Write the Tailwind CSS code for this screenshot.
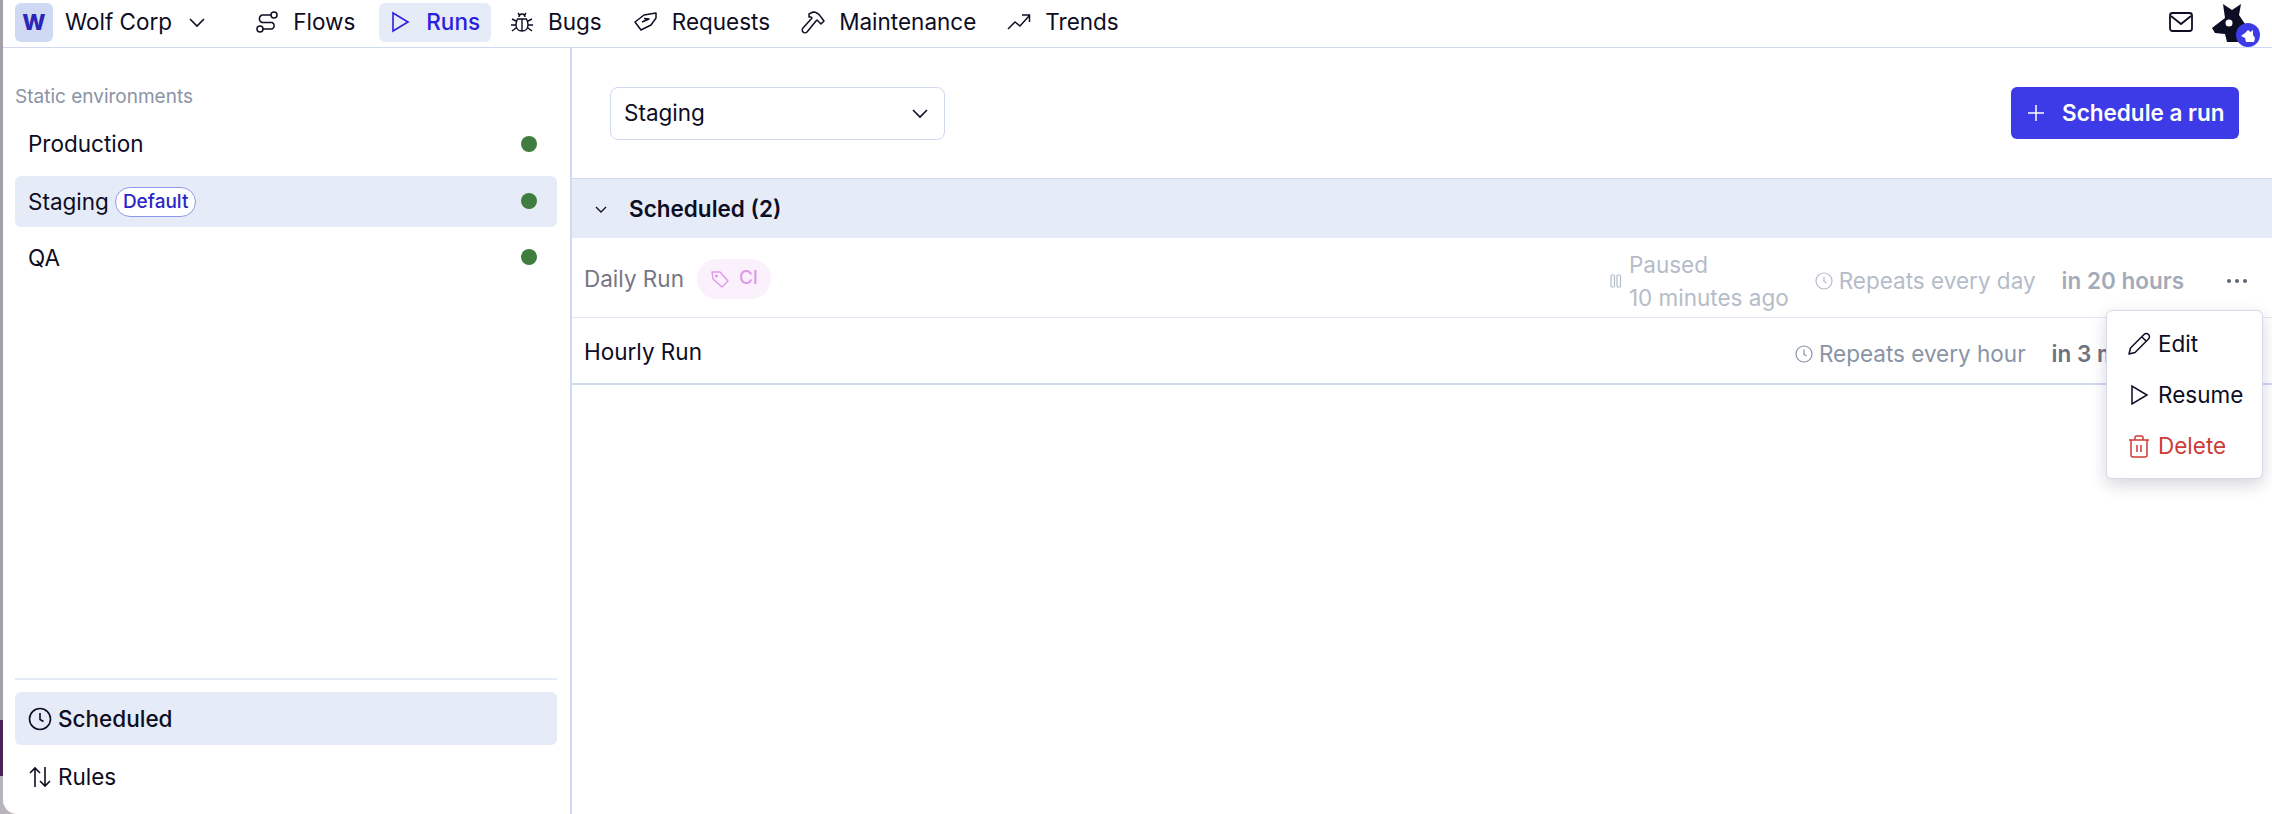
<!DOCTYPE html>
<html lang="en">
<head>
  <meta charset="UTF-8" />
  <title>Runs - Scheduled</title>
  <script src="https://cdn.jsdelivr.net/npm/@tailwindcss/browser@4"></script>
</head>
<body class="bg-[linear-gradient(#a49fa8_720px,#4a2458_720px,#4a2458_776px,#b9b4bc_776px)] font-['Inter',sans-serif] text-[22.5px] text-[#0d0d24]">
<div class="relative ml-[3px] h-[814px] overflow-hidden rounded-bl-[14px] bg-white">

  <!-- top nav -->
  <header class="flex h-[48px] items-center border-b border-[#d0d8f2] pb-[3px] pl-[12px] pr-[12px]">
    <div class="flex h-[39px] w-[38px] items-center justify-center rounded-[6px] bg-[#d0d9f4] text-[22px] font-extrabold text-[#2a26b8]">W</div>
    <span class="ml-[12px]">Wolf Corp</span>
    <svg class="ml-[15px]" width="20" height="20" viewBox="0 0 20 20" fill="none" stroke="currentColor" stroke-width="1.6"><path d="M3 7l7 7 7-7"/></svg>
    <nav class="ml-[36px] flex items-center gap-[7px]">
      <a class="mr-[5px] flex h-[39px] items-center gap-[14px] px-[12px]">
        <svg width="24" height="24" viewBox="0 0 24 24" fill="none" stroke="currentColor" stroke-width="1.5"><circle cx="19" cy="5" r="3"/><circle cx="5" cy="19" r="3"/><path d="M16 5H7a4 4 0 0 0 0 7.500h10a3.500 3.500 0 0 1 0 6.500H8"/></svg>
        Flows
      </a>
      <a class="flex h-[39px] items-center gap-[14px] rounded-[6px] bg-[#e6ebf8] px-[11px] font-medium text-[#2a20e0]">
        <svg width="22" height="24" viewBox="0 0 22 24" fill="none" stroke="currentColor" stroke-width="1.6"><path d="M3 3v18l15-9z"/></svg>
        Runs
      </a>
      <a class="mr-[1px] flex h-[39px] items-center gap-[14px] px-[12px]">
        <svg width="24" height="24" viewBox="0 0 24 24" fill="none" stroke="currentColor" stroke-width="1.4"><path d="M8 3l2 3M16 3l-2 3M9 7a3 3 0 0 1 6 0M12 9v12M7.500 9h9c1 2 1.500 4 1.500 6 0 3.500-2.500 6-6 6s-6-2.500-6-6c0-2 .5-4 1.500-6zM2 9l4 2M22 9l-4 2M1 15h5M23 15h-5M2 21l4-3M22 21l-4-3"/></svg>
        Bugs
      </a>
      <a class="flex h-[39px] items-center gap-[14px] px-[12px]">
        <svg width="24" height="24" viewBox="0 0 24 24" fill="none" stroke="currentColor" stroke-width="1.5" stroke-linejoin="round"><path d="M1 12l9-7 12-2v5l-5 7-10 5zM8 12l7-3-5-.5"/></svg>
        Requests
      </a>
      <a class="flex h-[39px] items-center gap-[14px] px-[12px]">
        <svg width="24" height="24" viewBox="0 0 24 24" fill="none" stroke="currentColor" stroke-width="1.5" stroke-linejoin="round"><path d="M8 4l4-2c3 0 6 2 8 5l3 4-3 3-4-4-1 1L6 22c-1 1-3 1-4 0s-1-3 0-4l9-10-1-1-2 0z"/></svg>
        Maintenance
      </a>
      <a class="flex h-[39px] items-center gap-[14px] px-[12px]">
        <svg width="24" height="24" viewBox="0 0 24 24" fill="none" stroke="currentColor" stroke-width="1.5"><path d="M1 19l7-7 5 4 9-10M15 5h7.500v7"/></svg>
        Trends
      </a>
    </nav>
    <div class="ml-auto flex items-center gap-[19px]">
      <svg width="24" height="24" viewBox="0 0 24 24" fill="none" stroke="currentColor" stroke-width="1.800"><rect x="1" y="3" width="22" height="18" rx="2.500"/><path d="M2 6l10 8 10-8"/></svg>
      <svg width="48" height="46" class="mt-[3px]" viewBox="0 0 48 46">
        <path fill="#0d0d24" d="M11 3l9 6 9-6-2 11 6 9-5 6v12H15l-2-8-10-1-3-5 13-10z"/>
        <circle cx="17" cy="22" r="3.500" fill="#fff"/>
        <circle cx="36" cy="34" r="12" fill="#3d3be8"/>
        <path fill="#fff" d="M36 29l2.500 2 2.500-2v5l2 3-1 4h-8l-1-4-4-2 4-3z"/>
      </svg>
    </div>
  </header>

  <div class="flex h-[766px]">
    <!-- sidebar -->
    <aside class="flex w-[569px] shrink-0 flex-col border-r-2 border-[#d0d8f2] pl-[12px] pr-[13px]">
      <p class="mt-[38px] text-[19px] leading-[22px] text-[#8a93a5]">Static environments</p>
      <ul class="mt-[11px] flex flex-col gap-[6px]">
        <li class="mb-[2px] flex h-[49px] items-center justify-between rounded-[6px] px-[13px]">
          <span>Production</span>
          <span class="mr-[7px] h-[16px] w-[16px] rounded-full bg-[#3f7d3f]"></span>
        </li>
        <li class="flex h-[51px] items-center justify-between rounded-[6px] bg-[#e6ebf8] px-[13px]">
          <span class="flex items-center gap-[6px]">Staging
            <span class="rounded-full border border-[#8f98ea] bg-white px-[7px] text-[19px] font-medium leading-[28px] text-[#2a26c8]">Default</span>
          </span>
          <span class="mb-[2px] mr-[7px] h-[16px] w-[16px] rounded-full bg-[#3f7d3f]"></span>
        </li>
        <li class="flex h-[50px] items-center justify-between rounded-[6px] px-[13px]">
          <span>QA</span>
          <span class="mb-[2px] mr-[7px] h-[16px] w-[16px] rounded-full bg-[#3f7d3f]"></span>
        </li>
      </ul>
      <div class="mt-auto border-t-2 border-[#e6ebf8] pb-[11px] pt-[12px]">
        <div class="flex h-[53px] items-center gap-[6px] rounded-[6px] bg-[#e6ebf8] px-[13px] font-medium">
          <svg width="24" height="24" viewBox="0 0 24 24" fill="none" stroke="currentColor" stroke-width="1.600"><circle cx="12" cy="12" r="10.500"/><path d="M12 6v6.500l3.500 2"/></svg>
          Scheduled
        </div>
        <div class="mt-[5px] flex h-[53px] items-center gap-[6px] px-[13px]">
          <svg width="24" height="24" viewBox="0 0 24 24" fill="none" stroke="currentColor" stroke-width="1.600"><path d="M7 22V3M2 8l5-5 5 5M17 2v19M12 16l5 5 5-5"/></svg>
          Rules
        </div>
      </div>
    </aside>

    <!-- main -->
    <main class="min-w-0 flex-1">
      <div class="flex h-[130px] items-center justify-between pl-[38px] pr-[33px]">
        <div class="flex h-[53px] w-[335px] items-center justify-between rounded-[8px] border border-[#d0d8f2] pl-[13px] pr-[14px]">
          <span>Staging</span>
          <svg width="20" height="20" viewBox="0 0 20 20" fill="none" stroke="currentColor" stroke-width="1.600"><path d="M3 7l7 7 7-7"/></svg>
        </div>
        <button class="flex h-[52px] w-[228px] items-center gap-[16px] rounded-[6px] bg-[#3d3be8] pl-[15px] font-semibold text-white">
          <svg width="20" height="20" viewBox="0 0 20 20" fill="none" stroke="currentColor" stroke-width="1.500"><path d="M10 2v16M2 10h16"/></svg>
          Schedule a run
        </button>
      </div>
      <div class="flex h-[60px] items-center border-t border-[#d0d8f2] bg-[#e6ebf8] pl-[21px] font-semibold">
        <svg width="16" height="16" viewBox="0 0 16 16" fill="none" stroke="currentColor" stroke-width="1.300"><path d="M3 6l5 5 5-5"/></svg>
        <span class="ml-[20px]">Scheduled (2)</span>
      </div>
      <!-- paused row -->
      <div class="flex h-[80px] items-center border-b border-[#e0e6f6] pl-[12px] pr-[24px] pt-[2px]">
        <span class="text-[#3b3b52] opacity-70">Daily Run</span>
        <span class="ml-[13px] flex h-[40px] items-center gap-[9px] rounded-full bg-[#faf1fd] px-[13px] text-[19px] font-medium text-[#dd9ae8]">
          <svg width="20" height="20" viewBox="0 0 20 20" fill="none" stroke="currentColor" stroke-width="1.400" stroke-linejoin="round"><path d="M2 3h8l8 9-6 6-9-8z"/><circle cx="6.500" cy="7" r=".8"/></svg>
          CI
        </span>
        <div class="ml-auto mt-[4px] flex items-center text-[#b5bcc9]">
          <svg width="14" height="16" viewBox="0 0 14 16" fill="none" stroke="currentColor" stroke-width="1.200"><rect x="2" y="2" width="3.500" height="12" rx="1"/><rect x="8" y="2" width="3.500" height="12" rx="1"/></svg>
          <span class="ml-[6px] leading-[33px]">Paused<br>10 minutes ago</span>
          <svg class="ml-[26px]" width="18" height="18" viewBox="0 0 18 18" fill="none" stroke="currentColor" stroke-width="1.200"><circle cx="9" cy="9" r="8"/><path d="M9 4.500V9.500l2.500 1.500"/></svg>
          <span class="ml-[6px]">Repeats every day</span>
          <span class="ml-[26px] font-semibold text-[#a4abb8]">in 20 hours</span>
          <svg class="ml-[42px]" width="22" height="6" viewBox="0 0 22 6" fill="#5f6675"><circle cx="3" cy="3" r="2"/><circle cx="11" cy="3" r="2"/><circle cx="19" cy="3" r="2"/></svg>
        </div>
      </div>
      <!-- active row -->
      <div class="flex h-[67px] items-center border-b-2 border-[#d0d8f2] pl-[12px] pr-[24px] pt-[3px]">
        <span>Hourly Run</span>
        <div class="ml-auto mt-[3px] flex items-center text-[#8a93a5]">
          <svg width="18" height="18" viewBox="0 0 18 18" fill="none" stroke="currentColor" stroke-width="1.200"><circle cx="9" cy="9" r="8"/><path d="M9 4.500V9.500l2.500 1.500"/></svg>
          <span class="ml-[6px]">Repeats every hour</span>
          <span class="ml-[26px] font-semibold text-[#6b7280]">in 3 minutes</span>
          <svg class="ml-[42px]" width="22" height="6" viewBox="0 0 22 6" fill="#5f6675"><circle cx="3" cy="3" r="2"/><circle cx="11" cy="3" r="2"/><circle cx="19" cy="3" r="2"/></svg>
        </div>
      </div>
    </main>
  </div>

  <!-- row action menu -->
  <div class="absolute left-[2103px] top-[310px] w-[157px] rounded-[6px] border border-[#d5d9e8] bg-white pl-[20px] py-[7px] shadow-[0_6px_16px_rgba(30,35,70,0.18)]">
    <div class="flex h-[51px] items-center gap-[7px]">
      <svg width="24" height="24" viewBox="0 0 24 24" fill="none" stroke="currentColor" stroke-width="1.500" stroke-linejoin="round"><path d="M2 22l1.500-6L17 2.500a2.500 2.500 0 0 1 4.500 4.500L8 20.500zM15 5l4 4"/></svg>
      Edit
    </div>
    <div class="flex h-[51px] items-center gap-[7px]">
      <svg width="24" height="24" viewBox="0 0 24 24" fill="none" stroke="currentColor" stroke-width="1.500"><path d="M5 3v18l15-9z"/></svg>
      Resume
    </div>
    <div class="flex h-[51px] items-center gap-[7px] text-[#cb3b37]">
      <svg width="24" height="24" viewBox="0 0 24 24" fill="none" stroke="currentColor" stroke-width="1.500"><path d="M2 6h20M8 6V3.500a1.500 1.500 0 0 1 1.500-1.500h5A1.500 1.500 0 0 1 16 3.500V6M4 6v15a2 2 0 0 0 2 2h12a2 2 0 0 0 2-2V6M10 11v7M14 11v7"/></svg>
      Delete
    </div>
  </div>
</div>
</body>
</html>
